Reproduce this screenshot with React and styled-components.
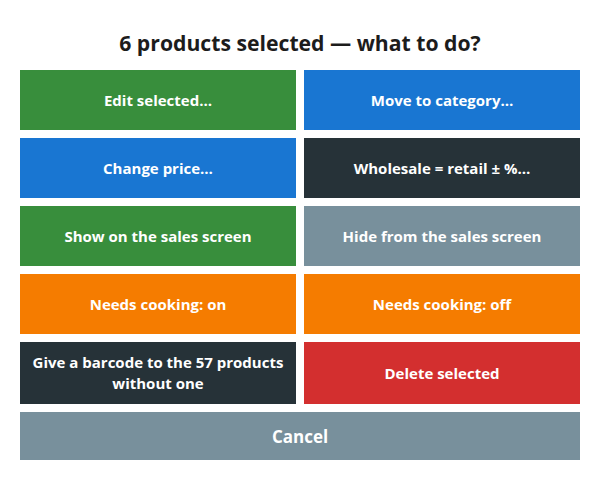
import React from 'react'
import styled, { createGlobalStyle } from 'styled-components'

const GlobalStyle = createGlobalStyle`
    html, body {
        margin: 0;
        padding: 0;
        background: #fff;
        font-family: "Open Sans", "Noto Sans", sans-serif;
    }
`

const colors = {
    green: '#388e3c',
    blue: '#1976d2',
    dark: '#263238',
    grey: '#78909c',
    orange: '#f57c00',
    red: '#d32f2f',
}

const actions = [
    { label: 'Edit selected…', color: 'green' },
    { label: 'Move to category…', color: 'blue' },
    { label: 'Change price…', color: 'blue' },
    { label: 'Wholesale = retail ± %…', color: 'dark' },
    { label: 'Show on the sales screen', color: 'green' },
    { label: 'Hide from the sales screen', color: 'grey' },
    { label: 'Needs cooking: on', color: 'orange' },
    { label: 'Needs cooking: off', color: 'orange' },
    { label: 'Give a barcode to the 57 products without one', color: 'dark' },
    { label: 'Delete selected', color: 'red' },
]

const App = () => {
    return (
        <Wrapper>
            <GlobalStyle />
            <Title>6 products selected — what to do?</Title>
            <Grid>
                {actions.map(a => (
                    <Action key={a.label} $color={colors[a.color]}>{a.label}</Action>
                ))}
                <CancelButton>Cancel</CancelButton>
            </Grid>
        </Wrapper>
    )
}

export default App

const Wrapper = styled.div`
    padding: 20px;
`

const Title = styled.h2`
    margin: 9px 0 13px;
    font-size: 21.2px;
    line-height: 28px;
    font-weight: 700;
    color: #1c1c1c;
    text-align: center;
`

const Grid = styled.div`
    display: grid;
    grid-template-columns: 1fr 1fr;
    gap: 8px;
`

const Action = styled.button`
    min-height: 60px;
    padding: 10px 8px;
    border: none;
    border-radius: 0;
    background: ${p => p.$color};
    color: #fff;
    font-family: inherit;
    font-size: 15px;
    line-height: 21px;
    font-weight: 700;
    cursor: pointer;
`

const CancelButton = styled(Action)`
    grid-column: 1 / -1;
    min-height: 48px;
    background: ${colors.grey};
    font-size: 17px;
`
